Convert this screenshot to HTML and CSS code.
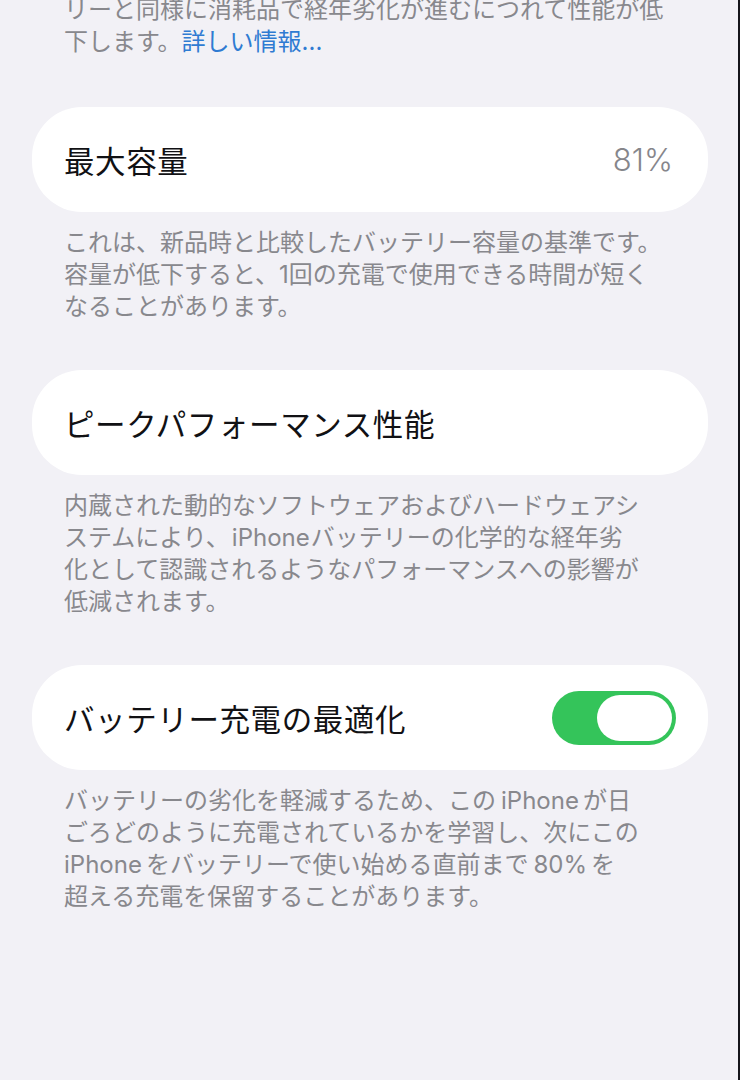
FILE: index.html
```html
<!DOCTYPE html>
<html lang="ja">
<head>
<meta charset="utf-8">
<title>バッテリーの状態</title>
<link rel="stylesheet" href="styles.css">
</head>
<body>
<div class="page">
  <p class="note note-top">リーと同様に消耗品で経年劣化が進むにつれて性能が低<br>下します。<a class="link" href="#">詳しい情報...</a></p>

  <section class="section section-first">
    <div class="card">
      <span class="card-title">最大容量</span>
      <span class="card-value">81%</span>
    </div>
    <p class="note">これは、新品時と比較したバッテリー容量の基準です。<br>容量が低下すると、1回の充電で使用できる時間が短く<br>なることがあります。</p>
  </section>

  <section class="section">
    <div class="card">
      <span class="card-title">ピークパフォーマンス性能</span>
    </div>
    <p class="note">内蔵された動的なソフトウェアおよびハードウェアシ<br>ステムにより、<span class="lat">iPhone</span>バッテリーの化学的な経年劣<br>化として認識されるようなパフォーマンスへの影響が<br>低減されます。</p>
  </section>

  <section class="section">
    <div class="card">
      <span class="card-title">バッテリー充電の最適化</span>
      <span class="toggle on"><span class="knob"></span></span>
    </div>
    <p class="note">バッテリーの劣化を軽減するため、この<span class="lat wide">iPhone</span>が日<br>ごろどのように充電されているかを学習し、次にこの<br><span class="lat wide first">iPhone</span>をバッテリーで使い始める直前まで<span class="lat wide">80%</span>を<br>超える充電を保留することがあります。</p>
  </section>
</div>
</body>
</html>
```

FILE: styles.css
```css
html, body {
  margin: 0;
  padding: 0;
}
body {
  background: #f2f1f6;
  font-family: "Inter", "Noto Sans CJK JP", sans-serif;
  overflow: hidden;
}
.page {
  box-sizing: border-box;
  width: 740px;
  height: 1080px;
  padding: 0 30px 0 32px;
  border-right: 2px solid #15151a;
  overflow: hidden;
}
.note {
  margin: 0;
  padding: 15px 0 0 32px;
  font-size: 24px;
  line-height: 32px;
  color: #88888d;
  white-space: nowrap;
}
.note-top {
  padding-top: 0;
  margin-top: -6px;
}
.link {
  color: #2f7bd2;
  text-decoration: none;
}
.lat {
  margin: 0 1px 0 2px;
}
.lat.wide {
  margin: 0 4px 0 5px;
}
.lat.first {
  margin-left: 0;
}
.section {
  margin-top: 47px;
}
.section-first {
  margin-top: 49px;
}
.card {
  display: flex;
  align-items: center;
  justify-content: space-between;
  height: 105px;
  padding: 0 32px;
  background: #ffffff;
  border-radius: 50px;
}
.card-title {
  font-size: 30.5px;
  letter-spacing: 0.6px;
  color: #111114;
}
.card-value {
  font-size: 31px;
  font-weight: 300;
  color: #86868b;
  margin-right: 3px;
}
.toggle {
  position: relative;
  display: block;
  width: 124px;
  height: 54px;
  border-radius: 27px;
  background: #34c45a;
}
.toggle .knob {
  position: absolute;
  top: 4px;
  right: 4px;
  width: 75px;
  height: 46px;
  border-radius: 23px;
  background: #ffffff;
}
```
